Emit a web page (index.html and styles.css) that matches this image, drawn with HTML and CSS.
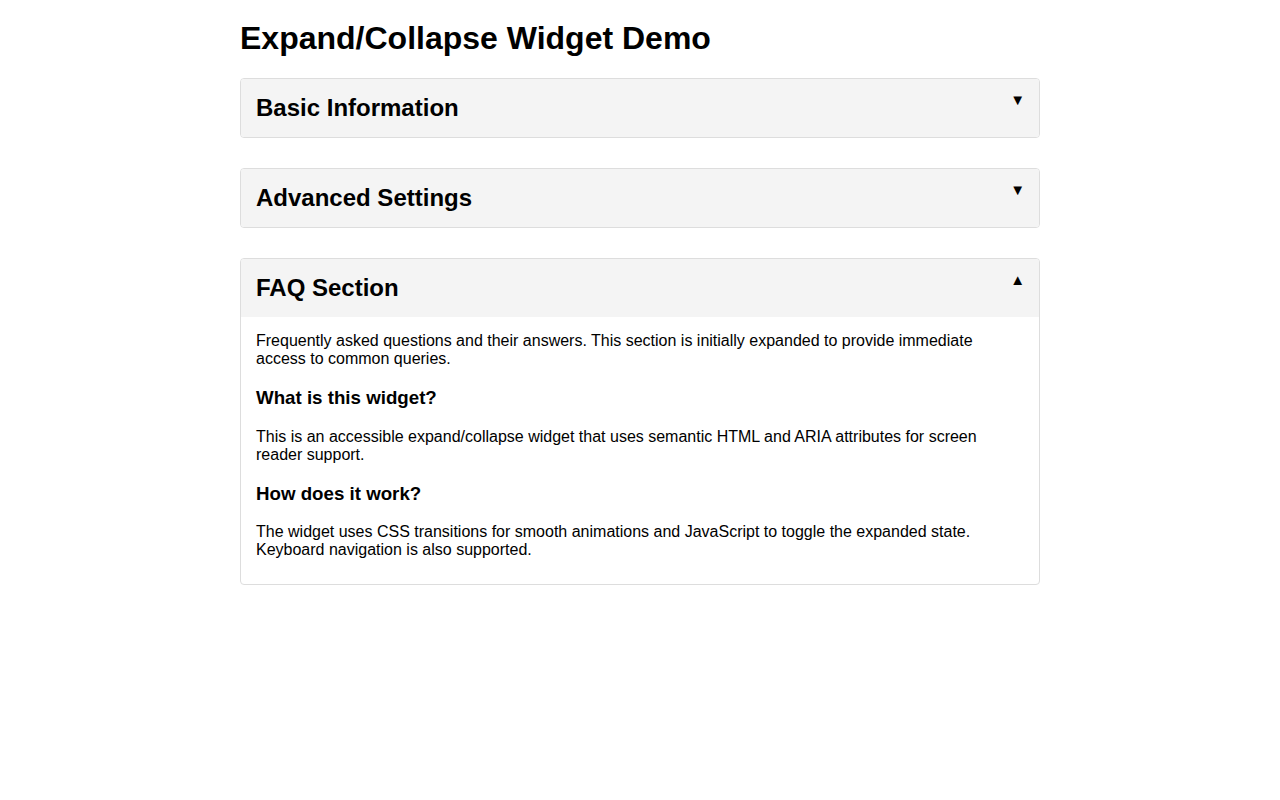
FILE: index.html
```html
<!DOCTYPE html>
<html lang="en">
<head>
<meta charset="utf-8">
<title>Expand/Collapse Widget Demo</title>
<link rel="stylesheet" href="styles.css">
</head>
<body>
<main class="container">
  <h1 class="title">Expand/Collapse Widget Demo</h1>

  <section class="panel">
    <div class="panel-header" role="button" aria-expanded="false" tabindex="0">
      <h2 class="panel-title">Basic Information</h2>
      <span class="arrow">▼</span>
    </div>
  </section>

  <section class="panel">
    <div class="panel-header" role="button" aria-expanded="false" tabindex="0">
      <h2 class="panel-title">Advanced Settings</h2>
      <span class="arrow">▼</span>
    </div>
  </section>

  <section class="panel">
    <div class="panel-header" role="button" aria-expanded="true" tabindex="0">
      <h2 class="panel-title">FAQ Section</h2>
      <span class="arrow">▲</span>
    </div>
    <div class="panel-content">
      <p class="intro">Frequently asked questions and their answers. This section is initially expanded to provide immediate access to common queries.</p>
      <h3 class="faq-q">What is this widget?</h3>
      <p>This is an accessible expand/collapse widget that uses semantic HTML and ARIA attributes for screen reader support.</p>
      <h3 class="faq-q">How does it work?</h3>
      <p>The widget uses CSS transitions for smooth animations and JavaScript to toggle the expanded state. Keyboard navigation is also supported.</p>
    </div>
  </section>
</main>
</body>
</html>
```

FILE: styles.css
```css
html, body {
  margin: 0;
  padding: 0;
  background: #fff;
}

body {
  font-family: "Liberation Sans", Arial, sans-serif;
  color: #000;
  padding: 20px;
}

.container {
  max-width: 800px;
  margin: 0 auto;
}

.title {
  font-size: 32px;
  font-weight: bold;
  margin: 0 0 21.44px;
}

.panel {
  border: 1px solid #ddd;
  border-radius: 4px;
  margin-bottom: 30px;
  overflow: hidden;
}

.panel-header {
  background: #f4f4f4;
  padding: 15px;
  display: flex;
  justify-content: space-between;
  align-items: flex-start;
  cursor: pointer;
}

.panel-title {
  margin: 0;
  font-size: 24px;
  font-weight: bold;
}

.arrow {
  font-size: 15px;
  line-height: 12px;
  margin-right: -1px;
}

.panel-content {
  padding: 0 15px 9px;
  font-size: 16px;
}

.panel-content p {
  margin: 16px 0;
}

.panel-content .intro {
  margin-top: 15px;
}

.faq-q {
  font-size: 18.72px;
  margin: 18.72px 0;
}
```
